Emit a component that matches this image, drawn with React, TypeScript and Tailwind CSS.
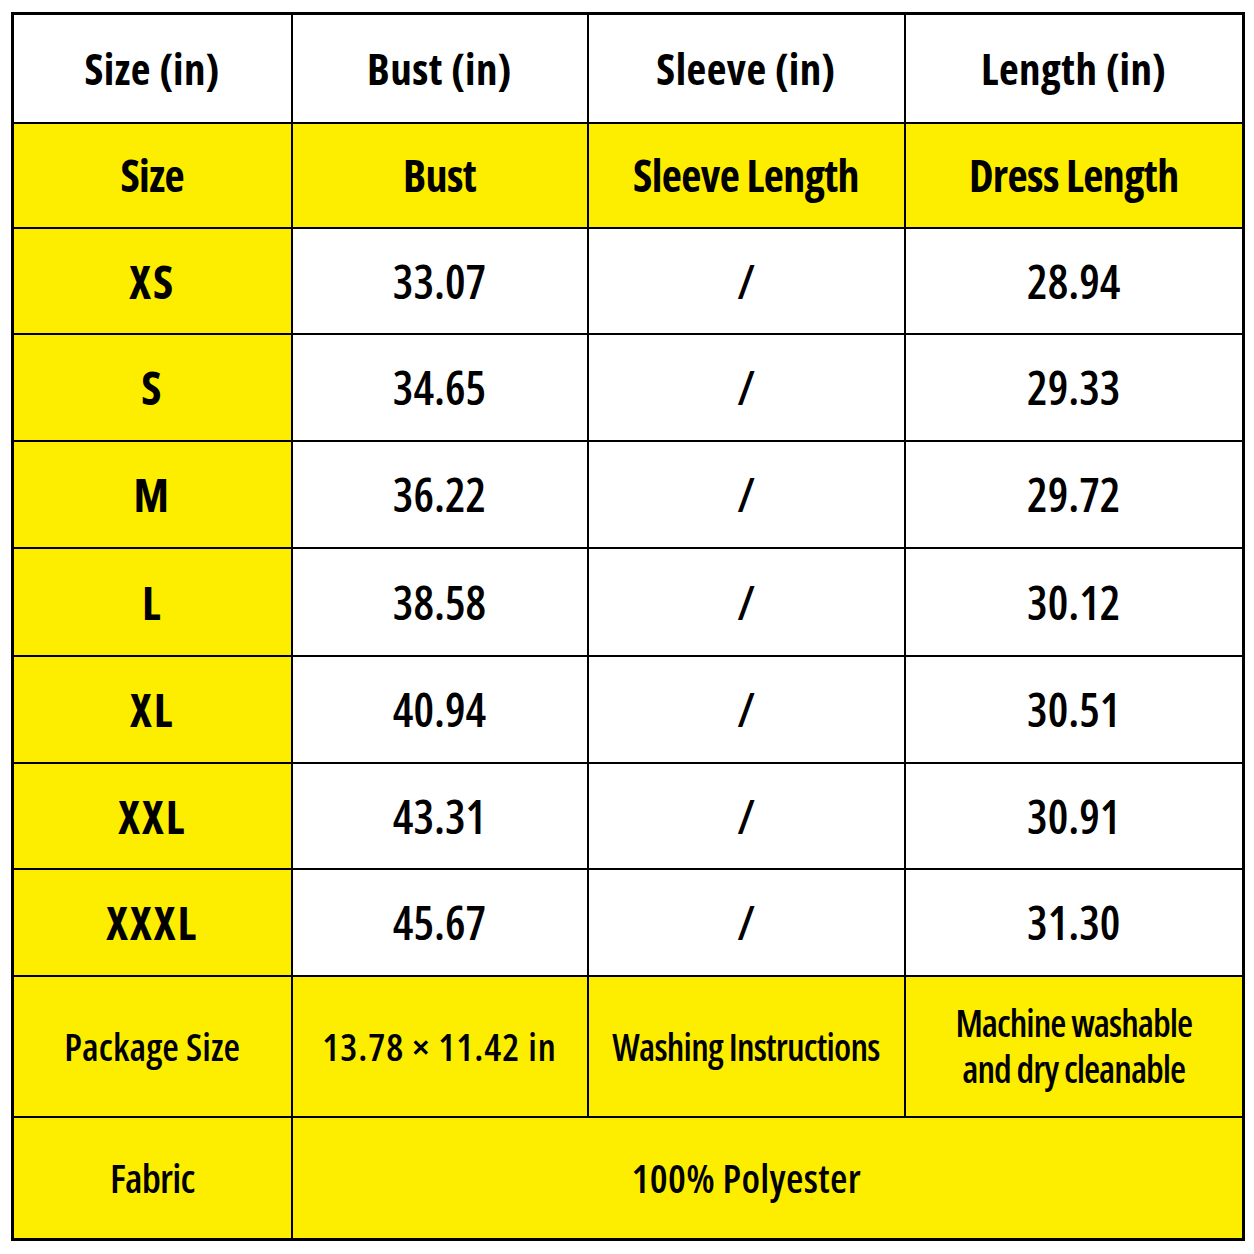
const YELLOW = "bg-[#fdee00]";

const rows = [
  ["XS", "33.07", "/", "28.94"],
  ["S", "34.65", "/", "29.33"],
  ["M", "36.22", "/", "29.72"],
  ["L", "38.58", "/", "30.12"],
  ["XL", "40.94", "/", "30.51"],
  ["XXL", "43.31", "/", "30.91"],
  ["XXXL", "45.67", "/", "31.30"],
];

const rowHeights = ["h-[106px]", "h-[107px]", "h-[107px]", "h-[108px]", "h-[107px]", "h-[106px]", "h-[107px]"];

const cell = "border-2 border-black text-center align-middle p-0 whitespace-nowrap";

export default function App() {
  return (
    <div className="w-[1254px] h-[1254px] bg-white pt-[12px] pl-[11px] font-['Open_Sans','Liberation_Sans',sans-serif] [font-stretch:75%] leading-none">
      <table className="table-fixed border-collapse w-[1231px] text-black border-[3px] border-black">
        <colgroup>
          <col className="w-[279px]" />
          <col className="w-[296px]" />
          <col className="w-[317px]" />
          <col className="w-[339px]" />
        </colgroup>
        <tbody>
          {/* unit header */}
          <tr className="h-[109px] bg-white text-[43px] font-bold tracking-[0.5px]">
            <td className={cell}>Size (in)</td>
            <td className={cell}>Bust (in)</td>
            <td className={cell}>Sleeve (in)</td>
            <td className={cell}>Length (in)</td>
          </tr>
          <tr className={`h-[105px] ${YELLOW} text-[44px] font-bold tracking-[-0.6px]`}>
            <td className={cell}>Size</td>
            <td className={cell}>Bust</td>
            <td className={cell}>Sleeve Length</td>
            <td className={cell}>Dress Length</td>
          </tr>
          {rows.map((r, i) => (
            <tr key={r[0]} className={`${rowHeights[i]} text-[46px]`}>
              <td className={`${cell} ${YELLOW} font-bold tracking-[2px]`}>{r[0]}</td>
              <td className={`${cell} bg-white font-semibold`}>{r[1]}</td>
              <td className={`${cell} bg-white font-semibold`}>{r[2]}</td>
              <td className={`${cell} bg-white font-semibold`}>{r[3]}</td>
            </tr>
          ))}
          <tr className={`h-[141px] ${YELLOW} text-[38px] font-semibold`}>
            <td className={`${cell} tracking-[0.1px]`}>Package Size</td>
            <td className={`${cell} tracking-[1px]`}>13.78 × 11.42 in</td>
            <td className={`${cell} text-[37px] tracking-[-0.8px]`}>Washing Instructions</td>
            <td className={`${cell} text-[37px] leading-[46px] tracking-[-1px]`}>
              Machine washable
              <br />
              and dry cleanable
            </td>
          </tr>
          <tr className={`h-[123px] ${YELLOW} text-[40px] font-semibold`}>
            <td className={`${cell} tracking-[-0.8px]`}>Fabric</td>
            <td className={`${cell} pr-[42px] tracking-[0.3px]`} colSpan={3}>
              100% Polyester
            </td>
          </tr>
        </tbody>
      </table>
    </div>
  );
}
